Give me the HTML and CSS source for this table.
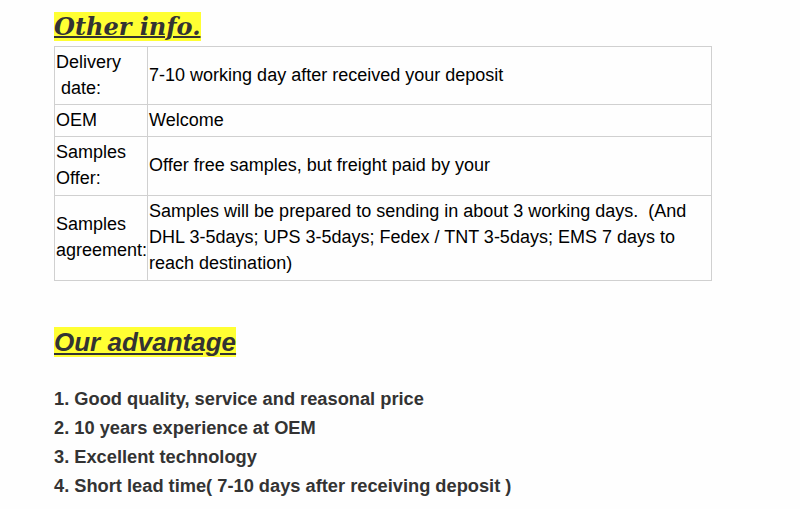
FILE: index.html
```html
<!DOCTYPE html>
<html>
<head>
<meta charset="utf-8">
<link rel="stylesheet" href="styles.css">
</head>
<body>
<div class="page">
  <h2 class="title"><span class="hl">Other info.</span></h2>
  <table class="info">
    <tr class="r1"><td class="k">Delivery<br>&nbsp;date:</td><td>7-10 working day after received your deposit</td></tr>
    <tr class="r2"><td class="k">OEM</td><td>Welcome</td></tr>
    <tr class="r3"><td class="k">Samples<br>Offer:</td><td>Offer free samples, but freight paid by your</td></tr>
    <tr class="r4"><td class="k">Samples<br>agreement:</td><td>Samples will be prepared to sending in about 3 working days.&nbsp; (And DHL 3-5days; UPS 3-5days; Fedex / TNT 3-5days; EMS 7 days to reach destination)</td></tr>
  </table>
  <h2 class="adv"><span class="hl">Our advantage</span></h2>
  <ol class="list">
    <li>1. Good quality, service and reasonal price</li>
    <li>2. 10 years experience at OEM</li>
    <li>3. Excellent technology</li>
    <li>4. Short lead time( 7-10 days after receiving deposit )</li>
  </ol>
</div>
</body>
</html>
```
FILE: styles.css
```css
html, body { margin: 0; padding: 0; background: #fefefe; }
.page { padding: 10px 0 0 54px; }
.title {
  margin: 0;
  font-family: "DejaVu Serif", Georgia, serif;
  font-style: italic;
  font-weight: bold;
  font-size: 24px;
  line-height: 34px;
  color: #333;
  text-decoration: underline;
  text-decoration-thickness: 2px;
}
.hl { background: #ffff33; }
.info {
  border-collapse: collapse;
  width: 658px;
  margin-top: 2px;
  font-family: "Liberation Sans", Arial, sans-serif;
  font-size: 18px;
  line-height: 26px;
  color: #000;
}
.info td {
  border: 1px solid #d0d0d0;
  padding: 2px 0 3px 1px;
  vertical-align: middle;
}
.info .r3 td, .info .r4 td { padding-bottom: 4px; }
.info td.k { width: 91px; }
.adv {
  margin: 47px 0 0 0;
  font-family: "Liberation Sans", Arial, sans-serif;
  font-style: italic;
  font-weight: bold;
  font-size: 26px;
  line-height: 29px;
  color: #333;
  text-decoration: underline;
}
.list {
  list-style: none;
  margin: 27px 0 0 0;
  padding: 0;
  font-family: "Liberation Sans", Arial, sans-serif;
  font-weight: bold;
  font-size: 18.25px;
  line-height: 29px;
  color: #333;
}
```
